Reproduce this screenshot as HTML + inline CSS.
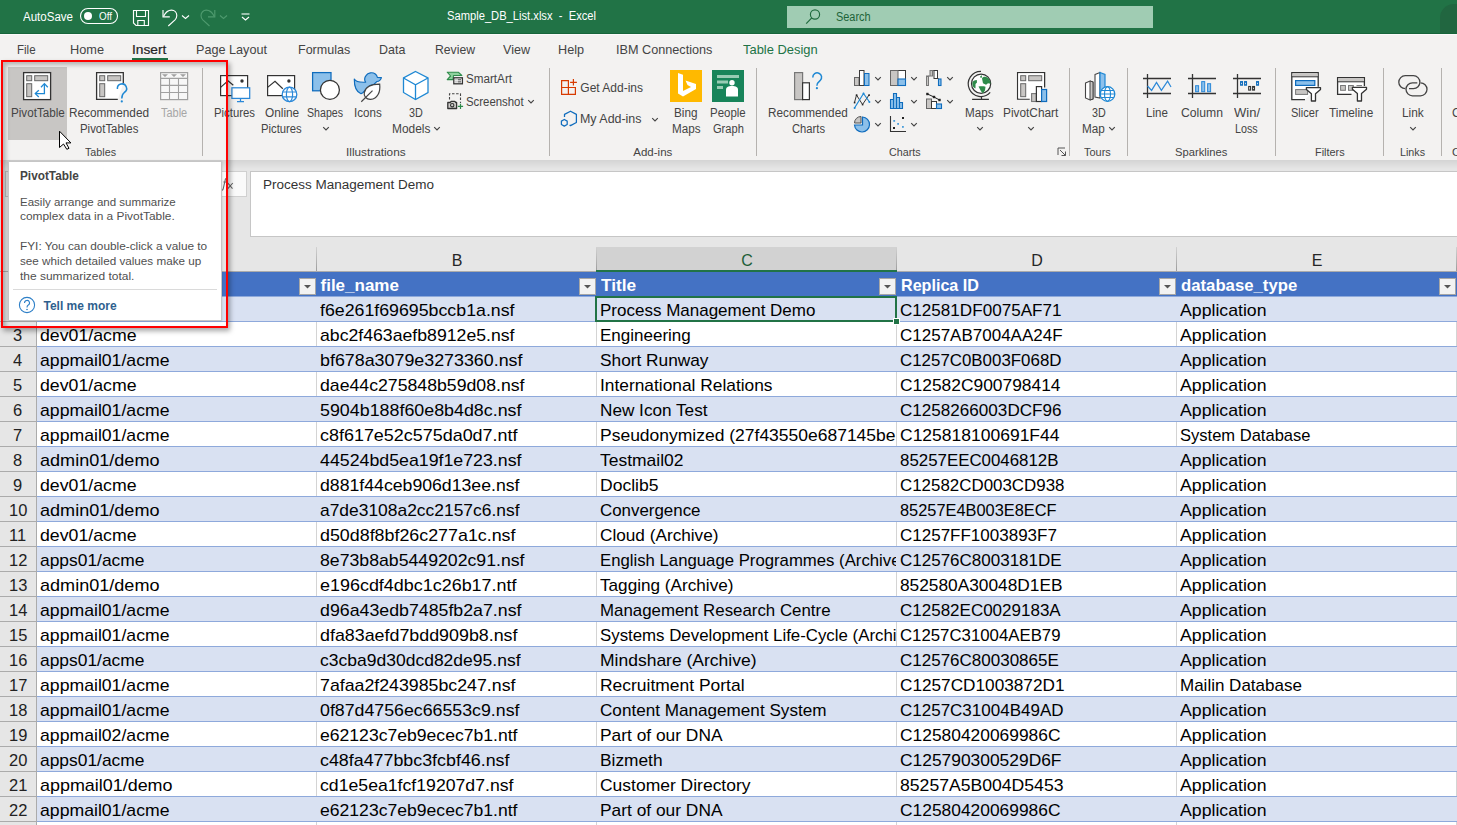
<!DOCTYPE html>
<html><head><meta charset="utf-8"><style>
html,body{margin:0;padding:0;width:1457px;height:825px;overflow:hidden;background:#fff;}
body{position:relative;font-family:"Liberation Sans",sans-serif;}
.t{position:absolute;white-space:pre;line-height:1;transform-origin:0 0;}
.r{position:absolute;}
.s{position:absolute;overflow:visible;}
</style></head><body>
<div class="r" style="left:0px;top:0px;width:1457px;height:33px;background:#217346;"></div>
<div class="r" style="left:0px;top:33px;width:1457px;height:1px;background:#17653B;"></div>
<div class="r" style="left:0px;top:34px;width:1457px;height:1px;background:#FBFAFA;"></div>
<div class="t" style="left:23px;top:11px;font-size:12.5px;color:#FFFFFF;transform:scaleX(0.9224);">AutoSave</div>
<svg class="s" style="left:79px;top:7px;" width="41" height="18" viewBox="0 0 41 18"><rect x="1.5" y="1.5" width="37" height="15" rx="7.5" fill="none" stroke="#fff" stroke-width="1.1"/><circle cx="9" cy="9" r="4" fill="#fff"/></svg>
<div class="t" style="left:99px;top:12px;font-size:10px;color:#FFFFFF;transform:scaleX(0.9883);">Off</div>
<svg class="s" style="left:132px;top:9px;" width="18" height="18" viewBox="0 0 18 18"><path d="M1.5 1.5 H16.5 V16.5 H4 L1.5 14 Z" fill="none" stroke="#fff" stroke-width="1.15"/><path d="M4.5 1.5 V7.5 H13.5 V1.5" fill="none" stroke="#fff" stroke-width="1.1"/><path d="M5.8 16.5 V11.5 H12.3 V16.5" fill="none" stroke="#fff" stroke-width="1.1"/></svg>
<svg class="s" style="left:160px;top:9px;" width="20" height="18" viewBox="0 0 20 18"><path d="M3 1 V7.9 H9.8" fill="none" stroke="#fff" stroke-width="1.15"/><path d="M3.6 7.3 C5.5 3.5 8.5 1.2 11.5 1.2 C14.5 1.2 16.8 3.5 16.8 6.5 C16.8 8.5 16 9.8 15 10.8 L8.3 17" fill="none" stroke="#fff" stroke-width="1.15"/></svg>
<svg class="s" style="left:181px;top:14px;" width="9" height="6" viewBox="0 0 9 6"><path d="M1 1.5 L4.5 4.5 L8 1.5" fill="none" stroke="#fff" stroke-width="1.1"/></svg>
<svg class="s" style="left:199px;top:9px;" width="20" height="18" viewBox="0 0 20 18"><path d="M15.8 1 V7.9 H9" fill="none" stroke="#4E9A6E" stroke-width="1.15"/><path d="M15.2 7.3 C13.3 3.5 10.3 1.2 7.3 1.2 C4.3 1.2 2 3.5 2 6.5 C2 8.5 2.8 9.8 3.8 10.8 L10.5 17" fill="none" stroke="#4E9A6E" stroke-width="1.15"/></svg>
<svg class="s" style="left:219px;top:14px;" width="9" height="6" viewBox="0 0 9 6"><path d="M1 1.5 L4.5 4.5 L8 1.5" fill="none" stroke="#4E9A6E" stroke-width="1.1"/></svg>
<svg class="s" style="left:240px;top:12px;" width="11" height="10" viewBox="0 0 11 10"><path d="M1.5 2 H9.5" stroke="#fff" stroke-width="1.1"/><path d="M2 5 L5.5 8 L9 5" fill="none" stroke="#fff" stroke-width="1.1"/></svg>
<div class="t" style="left:447px;top:10px;font-size:12px;color:#FFFFFF;transform:scaleX(0.9309);">Sample_DB_List.xlsx  -  Excel</div>
<div class="r" style="left:787px;top:6px;width:366px;height:22px;background:#A0CCB3;"></div>
<svg class="s" style="left:804px;top:9px;" width="18" height="17" viewBox="0 0 18 17"><circle cx="11" cy="5.5" r="4.6" fill="none" stroke="#1F6A3D" stroke-width="1.15"/><path d="M7.8 8.8 L2.2 14.6" stroke="#1F6A3D" stroke-width="1.2"/></svg>
<div class="t" style="left:836px;top:11px;font-size:12px;color:#1E6439;transform:scaleX(0.9100);">Search</div>
<div class="r" style="left:1440px;top:4px;width:40px;height:29px;border-radius:14px 0 0 0;background:#216640"></div>
<div class="r" style="left:0px;top:35px;width:1457px;height:125px;background:#F3F2F1;"></div>
<div class="t" style="left:17px;top:43px;font-size:13px;color:#444444;transform:scaleX(0.8879);">File</div>
<div class="t" style="left:69.5px;top:43px;font-size:13px;color:#444444;transform:scaleX(0.9805);">Home</div>
<div class="t" style="left:196.3px;top:43px;font-size:13px;color:#444444;transform:scaleX(0.9725);">Page Layout</div>
<div class="t" style="left:297.5px;top:43px;font-size:13px;color:#444444;transform:scaleX(0.9635);">Formulas</div>
<div class="t" style="left:379px;top:43px;font-size:13px;color:#444444;transform:scaleX(0.9578);">Data</div>
<div class="t" style="left:435px;top:43px;font-size:13px;color:#444444;transform:scaleX(0.9384);">Review</div>
<div class="t" style="left:503px;top:43px;font-size:13px;color:#444444;transform:scaleX(0.9663);">View</div>
<div class="t" style="left:558.4px;top:43px;font-size:13px;color:#444444;transform:scaleX(0.9725);">Help</div>
<div class="t" style="left:616px;top:43px;font-size:13px;color:#444444;transform:scaleX(0.9738);">IBM Connections</div>
<div class="t" style="left:132.3px;top:43px;font-size:13px;color:#262626;transform:scaleX(1.0580);-webkit-text-stroke:0.2px #262626;">Insert</div>
<div class="t" style="left:743px;top:43px;font-size:13px;color:#217346;transform:scaleX(0.9926);">Table Design</div>
<div class="r" style="left:132px;top:58px;width:36px;height:2px;background:#217346;"></div>
<div class="r" style="left:8px;top:67px;width:59px;height:73px;background:#C8C6C4;"></div>
<svg class="s" style="left:22px;top:71px;" width="31" height="31" viewBox="0 0 31 31"><rect x="1.6" y="1.6" width="27" height="27" fill="#fff" stroke="#333" stroke-width="1.3"/><rect x="4.7" y="4.7" width="5" height="5" fill="#C8C6C4" stroke="#666" stroke-width="1"/><rect x="12.7" y="4.7" width="13" height="5" fill="#C8C6C4" stroke="#666" stroke-width="1"/><rect x="4.7" y="12.7" width="5" height="13" fill="#C8C6C4" stroke="#666" stroke-width="1"/><path d="M22.4 13 V22.6 H13.5" fill="none" stroke="#1E88D4" stroke-width="1.3"/><path d="M19 16.2 L22.4 12.6 L25.8 16.2" fill="none" stroke="#1E88D4" stroke-width="1.3"/><path d="M16.8 19.2 L13.3 22.6 L16.8 26" fill="none" stroke="#1E88D4" stroke-width="1.3"/></svg>
<div class="t" style="left:10.5px;top:107px;font-size:12px;color:#444444;transform:scaleX(0.9717);">PivotTable</div>
<svg class="s" style="left:95px;top:71px;" width="33" height="33" viewBox="0 0 33 33"><path d="M28.3 12.5 V1.6 H1.6 V28.3 H22.8" fill="#fff" stroke="#333" stroke-width="1.3"/><rect x="4.7" y="4.7" width="5" height="5" fill="#C8C6C4" stroke="#666" stroke-width="1"/><rect x="12.7" y="4.7" width="13" height="5" fill="#C8C6C4" stroke="#666" stroke-width="1"/><rect x="4.7" y="12.7" width="5" height="13" fill="#C8C6C4" stroke="#666" stroke-width="1"/><path d="M22.4 18 A4.6 4.6 0 1 1 29.3 21.5 C27.6 22.8 26.8 23.6 26.8 27.5" fill="none" stroke="#1E88D4" stroke-width="1.5"/><circle cx="26.8" cy="30.4" r="1.1" fill="#1E88D4"/></svg>
<div class="t" style="left:69.3px;top:107px;font-size:12px;color:#444444;transform:scaleX(0.9831);">Recommended</div>
<div class="t" style="left:80.4px;top:123px;font-size:12px;color:#444444;transform:scaleX(0.9517);">PivotTables</div>
<svg class="s" style="left:159px;top:71px;" width="31" height="31" viewBox="0 0 31 31"><rect x="1.6" y="1.6" width="27" height="27" fill="#F7F7F7" stroke="#A0A0A0" stroke-width="1.2"/><path d="M10.5 7.4 V28.6 M19.5 7.4 V28.6 M1.6 7.4 H28.6 M1.6 14.4 H28.6 M1.6 21.5 H28.6" stroke="#A0A0A0" stroke-width="1.1"/><path d="M3 3.2 H9 L6 5.9Z M12 3.2 H18 L15 5.9Z M21 3.2 H27 L24 5.9Z" fill="#A0A0A0"/></svg>
<div class="t" style="left:160.8px;top:107px;font-size:12px;color:#A6A6A6;transform:scaleX(0.9133);">Table</div>
<div class="t" style="left:85.3px;top:147px;font-size:11.5px;color:#444444;transform:scaleX(0.9325);">Tables</div>
<div class="r" style="left:202px;top:68px;width:1px;height:88px;background:#B5B2AF;"></div>
<svg class="s" style="left:219px;top:74px;" width="34" height="30" viewBox="0 0 34 30"><rect x="1.6" y="1.6" width="27" height="20" fill="#fff" stroke="#333" stroke-width="1.2"/><path d="M1.6 13.4 L9 6.7 L14.3 11.2" fill="none" stroke="#333" stroke-width="1.2"/><circle cx="23" cy="7" r="1.7" fill="#333"/><rect x="12.9" y="13.8" width="17.8" height="10.6" fill="#fff" stroke="#2B88D8" stroke-width="1.25"/><path d="M21.5 24.4 V27.3 M18 27.6 H25" stroke="#2B88D8" stroke-width="1.25"/></svg>
<div class="t" style="left:213.5px;top:107px;font-size:12px;color:#444444;transform:scaleX(0.9458);">Pictures</div>
<svg class="s" style="left:266px;top:74px;" width="34" height="30" viewBox="0 0 34 30"><rect x="1.6" y="1.6" width="27" height="20" fill="#fff" stroke="#333" stroke-width="1.2"/><path d="M1.6 13.4 L9 7.2 L16.8 14.7" fill="none" stroke="#333" stroke-width="1.2"/><circle cx="22.9" cy="7" r="1.7" fill="#333"/><circle cx="23.5" cy="20.4" r="7.3" fill="#fff" stroke="#2B88D8" stroke-width="1.3"/><ellipse cx="23.5" cy="20.4" rx="3.1" ry="7.3" fill="none" stroke="#2B88D8" stroke-width="1.2"/><path d="M16.5 18 H30.5 M16.5 22.8 H30.5" stroke="#2B88D8" stroke-width="1.2"/></svg>
<div class="t" style="left:264.7px;top:107px;font-size:12px;color:#444444;transform:scaleX(0.9859);">Online</div>
<div class="t" style="left:260.8px;top:123px;font-size:12px;color:#444444;transform:scaleX(0.9389);">Pictures</div>
<svg class="s" style="left:311px;top:71px;" width="31" height="31" viewBox="0 0 31 31"><rect x="1.6" y="1.6" width="18.4" height="18.2" fill="#8CC0EA" stroke="#0F6CBD" stroke-width="1.25"/><circle cx="18.9" cy="18.9" r="9.5" fill="#fff" stroke="#333" stroke-width="1.25"/></svg>
<div class="t" style="left:307.4px;top:107px;font-size:12px;color:#444444;transform:scaleX(0.8845);">Shapes</div>
<svg class="s" style="left:353px;top:71px;" width="30" height="32" viewBox="0 0 30 32"><path d="M1.3 8 C2.5 10.5 6 11.5 12.6 11.2 C11.5 9.5 11.6 6.5 13 4.6 C15 1.6 19.5 0.8 22.3 3 C23.3 3.8 24 4.9 24.4 6.3 L28.4 6.6 C27.8 8.8 26 10.3 23.8 10.5 C22.5 12.5 20 14 17 14.5 L10 21.5 C8.8 22.5 8.2 22.7 8 22.7 C3.5 21 1.2 16 1.3 8 Z" fill="#8CC0EA" stroke="#0F6CBD" stroke-width="1.2" stroke-linejoin="round"/><path d="M26.7 13.2 C20 13.2 12.7 15 11.3 21.5 C10.5 25.5 13.5 28.6 17.6 28.4 C24.5 27.8 27.6 21 26.7 13.2 Z" fill="#fff" stroke="#444" stroke-width="1.2"/><path d="M8.3 30.7 L19.5 19.6" stroke="#444" stroke-width="1.2"/></svg>
<div class="t" style="left:354px;top:107px;font-size:12px;color:#444444;transform:scaleX(0.9658);">Icons</div>
<svg class="s" style="left:402px;top:70px;" width="28" height="31" viewBox="0 0 28 31"><path d="M13.5 1.5 L26 8 V22.5 L13.5 29.5 L1.5 22.5 V8 Z" fill="#fff" stroke="#1E88D4" stroke-width="1.3"/><path d="M1.5 8 L13.5 14.8 L26 8 M13.5 14.8 V29.5" fill="none" stroke="#1E88D4" stroke-width="1.3"/></svg>
<div class="t" style="left:409px;top:107px;font-size:12px;color:#444444;transform:scaleX(0.8996);">3D</div>
<div class="t" style="left:391.6px;top:122.5px;font-size:12px;color:#444444;transform:scaleX(0.9927);">Models</div>
<svg class="s" style="left:446px;top:71px;" width="19" height="15" viewBox="0 0 19 15"><path d="M1.2 1.2 H12.3 L15.8 4.5 H7.5 L7 8.6 H1.2 L4.6 5 Z" fill="#8FD19E" stroke="#2E8B4A" stroke-width="1.1" stroke-linejoin="round"/><rect x="7.8" y="6.8" width="8.6" height="6" fill="#fff" stroke="#333" stroke-width="1.3"/><path d="M9.6 8.8 H10.4 M11.6 8.8 H15 M9.6 10.9 H10.4 M11.6 10.9 H15" stroke="#333" stroke-width="1"/></svg>
<div class="t" style="left:466.4px;top:73px;font-size:12px;color:#444444;transform:scaleX(0.9717);">SmartArt</div>
<svg class="s" style="left:446px;top:92px;" width="19" height="18" viewBox="0 0 19 18"><path d="M3.5 7.5 V1.8 H14.5 V11" fill="none" stroke="#444" stroke-width="1.1" stroke-dasharray="2.5 1.6"/><path d="M1.8 10.5 H4.2 L5.2 9.3 H8.8 L9.8 10.5 H10.6 V16.5 H1.8 Z" fill="#D0CECC" stroke="#333" stroke-width="1.3" stroke-linejoin="round"/><circle cx="6.2" cy="13.2" r="1.7" fill="none" stroke="#333" stroke-width="1.1"/><path d="M14.5 11.8 V17 M11.9 14.4 H17.1" stroke="#2E8B4A" stroke-width="1.2"/></svg>
<div class="t" style="left:466.4px;top:95.5px;font-size:12px;color:#444444;transform:scaleX(0.9489);">Screenshot</div>
<div class="t" style="left:345.8px;top:147px;font-size:11.5px;color:#444444;transform:scaleX(1.0247);">Illustrations</div>
<div class="r" style="left:549px;top:68px;width:1px;height:88px;background:#B5B2AF;"></div>
<svg class="s" style="left:560px;top:78px;" width="18" height="18" viewBox="0 0 18 18"><path d="M1.6 2.6 H8.4 V16.4 H1.6 Z M1.6 9.5 H15.4 V16.4 H8.4" fill="none" stroke="#D83B01" stroke-width="1.2"/><path d="M13.4 1 V7.6 M10.1 4.4 H16.9" stroke="#D83B01" stroke-width="1.2"/></svg>
<div class="t" style="left:580.3px;top:81.5px;font-size:12px;color:#444444;">Get Add-ins</div>
<svg class="s" style="left:560px;top:110px;" width="18" height="18" viewBox="0 0 18 18"><path d="M4.5 6.9 V4.4 L10.5 1.2 L16.4 4.4 V12.5 L10.5 15.6 L9.6 15.1" fill="none" stroke="#0F6CBD" stroke-width="1.25" stroke-linejoin="round"/><path d="M4.3 9.5 L7.2 11.1 V14.5 L4.3 16.1 L1.4 14.5 V11.1 Z" fill="none" stroke="#0F6CBD" stroke-width="1.25" stroke-linejoin="round"/></svg>
<div class="t" style="left:580.3px;top:113.3px;font-size:12px;color:#444444;transform:scaleX(1.0361);">My Add-ins</div>
<div class="r" style="left:670px;top:70px;width:32px;height:32px;background:#FFB900;"></div>
<svg class="s" style="left:670px;top:70px;" width="32" height="32" viewBox="0 0 32 32"><path d="M8 3 L13 4.8 V21 L21 17 L17.5 15 L15.5 10.5 L26 14 V19 L13 26.5 L8 23.5 Z" fill="#fff"/></svg>
<div class="t" style="left:674.2px;top:107px;font-size:12px;color:#444444;transform:scaleX(0.9784);">Bing</div>
<div class="t" style="left:671.5px;top:123px;font-size:12px;color:#444444;transform:scaleX(0.9712);">Maps</div>
<div class="r" style="left:712px;top:70px;width:32px;height:32px;background:#18845A;"></div>
<svg class="s" style="left:712px;top:70px;" width="32" height="32" viewBox="0 0 32 32"><rect x="5" y="5" width="22" height="3" fill="#98CBB4"/><rect x="5" y="10.5" width="11" height="3" fill="#98CBB4"/><rect x="5" y="16" width="6" height="3" fill="#98CBB4"/><circle cx="20" cy="12.7" r="2.7" fill="#fff"/><path d="M14 26.5 V20 C14 17 16 16 20 16 C24 16 26 17 26 20 V26.5 Z" fill="#fff"/></svg>
<div class="t" style="left:710.3px;top:107px;font-size:12px;color:#444444;transform:scaleX(0.9554);">People</div>
<div class="t" style="left:712.6px;top:123px;font-size:12px;color:#444444;transform:scaleX(0.9235);">Graph</div>
<div class="t" style="left:633.3px;top:147px;font-size:11.5px;color:#444444;">Add-ins</div>
<div class="r" style="left:756px;top:68px;width:1px;height:88px;background:#B5B2AF;"></div>
<svg class="s" style="left:793px;top:71px;" width="31" height="31" viewBox="0 0 31 31"><rect x="1.6" y="1.6" width="8" height="27" fill="#C8C6C4" stroke="#777" stroke-width="1.2"/><rect x="9.6" y="11.8" width="6.8" height="16.8" fill="#fff" stroke="#333" stroke-width="1.2"/><path d="M19.8 6.5 A4.4 4.4 0 1 1 27.2 9.5 C25.2 11.2 23.9 12.2 23.9 14.8" fill="none" stroke="#1E88D4" stroke-width="1.5"/><circle cx="23.9" cy="17.2" r="1.1" fill="#1E88D4"/></svg>
<div class="t" style="left:767.7px;top:107px;font-size:12px;color:#444444;transform:scaleX(0.9794);">Recommended</div>
<div class="t" style="left:791.9px;top:123px;font-size:12px;color:#444444;transform:scaleX(0.9337);">Charts</div>
<svg class="s" style="left:853px;top:69px;" width="19" height="19" viewBox="0 0 19 19"><rect x="1.5" y="8.5" width="4.5" height="8" fill="#C8C6C4" stroke="#666" stroke-width="1"/><rect x="6.5" y="1.5" width="4.5" height="15" fill="#fff" stroke="#3A3A3A" stroke-width="1"/><rect x="11.5" y="4.5" width="4.5" height="12" fill="#8CC0EA" stroke="#0F6CBD" stroke-width="1"/></svg>
<svg class="s" style="left:874px;top:76px;" width="8" height="6" viewBox="0 0 8 6"><path d="M1.2 1.2 L4 4 L6.8 1.2" fill="none" stroke="#444" stroke-width="1.15"/></svg>
<svg class="s" style="left:853px;top:92px;" width="19" height="19" viewBox="0 0 19 19"><path d="M1.5 10.5 L3.5 3 L9.5 12.5 L16 3" fill="none" stroke="#333" stroke-width="1"/><rect x="0.8" y="9.8" width="1.6" height="1.6" fill="#222"/><rect x="2.8" y="2.3" width="1.6" height="1.6" fill="#222"/><rect x="8.8" y="11.8" width="1.6" height="1.6" fill="#222"/><rect x="15.3" y="2.3" width="1.6" height="1.6" fill="#222"/><path d="M1.5 16 L10.5 1.5 L16.5 10" fill="none" stroke="#1E88D4" stroke-width="1.2"/><circle cx="1.6" cy="16" r="1" fill="#1E88D4"/><circle cx="10.5" cy="1.6" r="1" fill="#1E88D4"/><circle cx="16.4" cy="10" r="1" fill="#1E88D4"/></svg>
<svg class="s" style="left:874px;top:99px;" width="8" height="6" viewBox="0 0 8 6"><path d="M1.2 1.2 L4 4 L6.8 1.2" fill="none" stroke="#444" stroke-width="1.15"/></svg>
<svg class="s" style="left:853px;top:115px;" width="19" height="19" viewBox="0 0 19 19"><path d="M9.5 2 A7.5 7.5 0 1 1 1.5 10 H9.5 Z" fill="#8CC0EA" stroke="#0F6CBD" stroke-width="1.2"/><path d="M8 1.5 A6.5 6.5 0 0 0 1.5 8 H8 Z" fill="#C8C6C4" stroke="#555" stroke-width="1"/></svg>
<svg class="s" style="left:874px;top:122px;" width="8" height="6" viewBox="0 0 8 6"><path d="M1.2 1.2 L4 4 L6.8 1.2" fill="none" stroke="#444" stroke-width="1.15"/></svg>
<svg class="s" style="left:889px;top:69px;" width="19" height="19" viewBox="0 0 19 19"><rect x="1.5" y="1.5" width="15" height="15" fill="#fff" stroke="#3A3A3A" stroke-width="1"/><rect x="1.5" y="1.5" width="7.5" height="15" fill="#C8C6C4" stroke="#666" stroke-width="1"/><rect x="9" y="10" width="7.5" height="6.5" fill="#8CC0EA" stroke="#0F6CBD" stroke-width="1.1"/></svg>
<svg class="s" style="left:910px;top:76px;" width="8" height="6" viewBox="0 0 8 6"><path d="M1.2 1.2 L4 4 L6.8 1.2" fill="none" stroke="#444" stroke-width="1.15"/></svg>
<svg class="s" style="left:889px;top:92px;" width="19" height="19" viewBox="0 0 19 19"><path d="M1.5 16.5 V7.5 H4.5 V16.5 Z M4.5 16.5 V1.5 H7.5 V16.5 Z M7.5 16.5 V5.5 H10.5 V16.5 Z M10.5 16.5 V10.5 H13.5 V16.5 Z" fill="#8CC0EA" stroke="#0F6CBD" stroke-width="1.1"/></svg>
<svg class="s" style="left:910px;top:99px;" width="8" height="6" viewBox="0 0 8 6"><path d="M1.2 1.2 L4 4 L6.8 1.2" fill="none" stroke="#444" stroke-width="1.15"/></svg>
<svg class="s" style="left:889px;top:115px;" width="19" height="19" viewBox="0 0 19 19"><path d="M1.5 1 V16.5 H17" fill="none" stroke="#333" stroke-width="1.1"/><rect x="4" y="12" width="2" height="2" fill="#222"/><rect x="13" y="2" width="2" height="2" fill="#222"/><rect x="4.3" y="5" width="1.8" height="1.8" fill="#1E88D4" opacity=".8"/><rect x="8.2" y="8" width="1.8" height="1.8" fill="#1E88D4" opacity=".8"/><rect x="13" y="11" width="1.8" height="1.8" fill="#1E88D4" opacity=".8"/></svg>
<svg class="s" style="left:910px;top:122px;" width="8" height="6" viewBox="0 0 8 6"><path d="M1.2 1.2 L4 4 L6.8 1.2" fill="none" stroke="#444" stroke-width="1.15"/></svg>
<svg class="s" style="left:925px;top:69px;" width="19" height="19" viewBox="0 0 19 19"><rect x="1.5" y="7" width="2" height="9.5" fill="#C8C6C4" stroke="#777" stroke-width="1"/><rect x="5" y="1.5" width="2.5" height="5.5" fill="#C8C6C4" stroke="#777" stroke-width="1"/><path d="M3.5 7 H5 M7.5 1.5 H9" stroke="#777" stroke-width="1"/><rect x="9" y="1.5" width="3.5" height="8" fill="#fff" stroke="#3A3A3A" stroke-width="1"/><rect x="13.5" y="10" width="2.5" height="6.5" fill="#8CC0EA" stroke="#0F6CBD" stroke-width="1.1"/><path d="M12.5 9.5 H13.5" stroke="#3A3A3A" stroke-width="1"/></svg>
<svg class="s" style="left:946px;top:76px;" width="8" height="6" viewBox="0 0 8 6"><path d="M1.2 1.2 L4 4 L6.8 1.2" fill="none" stroke="#444" stroke-width="1.15"/></svg>
<svg class="s" style="left:925px;top:92px;" width="19" height="19" viewBox="0 0 19 19"><rect x="1.5" y="7" width="5" height="9.5" fill="#C8C6C4" stroke="#666" stroke-width="1"/><rect x="6.5" y="9.5" width="5" height="7" fill="#fff" stroke="#3A3A3A" stroke-width="1"/><rect x="11.5" y="12" width="5" height="4.5" fill="#8CC0EA" stroke="#0F6CBD" stroke-width="1.1"/><path d="M2.5 2 L9 5 L14.5 8" fill="none" stroke="#222" stroke-width="1"/><rect x="1.2" y="0.8" width="2.4" height="2.4" fill="#222"/><rect x="7.8" y="3.8" width="2.4" height="2.4" fill="#222"/><rect x="13.3" y="6.8" width="2.4" height="2.4" fill="#222"/></svg>
<svg class="s" style="left:946px;top:99px;" width="8" height="6" viewBox="0 0 8 6"><path d="M1.2 1.2 L4 4 L6.8 1.2" fill="none" stroke="#444" stroke-width="1.15"/></svg>
<svg class="s" style="left:966px;top:70px;" width="27" height="31" viewBox="0 0 27 31"><circle cx="15.1" cy="13.7" r="9.6" fill="#fff" stroke="#333" stroke-width="1.2"/><path d="M6.3 13 C6.5 11 8.5 10.3 10.8 10 L11 12.5 L9.5 14 L9.5 18.5 C7.5 18 6.3 16 6.3 13Z" fill="#2E8B4A"/><path d="M16 8.5 C16.5 6.8 19 6.3 21.5 7.4 C23.5 8.8 24.5 11 24.6 13.8 L22 13.2 L20 14.8 L17 13.2 Z" fill="#2E8B4A"/><path d="M14.2 6.2 L16 5.2 L15.8 7.8 L14.4 7.8Z" fill="#2E8B4A"/><path d="M12.5 16.5 C14.5 16.3 17.5 16 19.5 16.8 L19 20.5 L17 23.3 C15.2 22.5 14 19 12.5 16.5Z" fill="#2E8B4A"/><path d="M15 1.3 A12.6 12.6 0 1 0 24.2 22.4" fill="none" stroke="#333" stroke-width="1.2"/><path d="M15.5 26 V29.4 M6.1 29.4 H22.9" stroke="#333" stroke-width="1.2"/></svg>
<div class="t" style="left:965.4px;top:107px;font-size:12px;color:#444444;transform:scaleX(0.9712);">Maps</div>
<svg class="s" style="left:976px;top:126px;" width="8" height="6" viewBox="0 0 8 6"><path d="M1.2 1.2 L4 4 L6.8 1.2" fill="none" stroke="#444" stroke-width="1.15"/></svg>
<svg class="s" style="left:1016px;top:71px;" width="33" height="33" viewBox="0 0 33 33"><path d="M28.6 16.6 V1.6 H1.6 V28.2 H13.7" fill="#fff" stroke="#333" stroke-width="1.3"/><rect x="2.3" y="2.3" width="25.6" height="25.2" fill="#fff"/><rect x="4.7" y="4.7" width="5" height="5" fill="#C8C6C4" stroke="#666" stroke-width="1"/><rect x="12.7" y="4.7" width="13" height="5" fill="#C8C6C4" stroke="#666" stroke-width="1"/><rect x="4.7" y="12.7" width="5" height="13" fill="#C8C6C4" stroke="#666" stroke-width="1"/><rect x="15.6" y="22.6" width="4.8" height="7.9" fill="#C8C6C4" stroke="#777" stroke-width="1.1"/><rect x="20.4" y="15.6" width="5.2" height="14.9" fill="#fff" stroke="#333" stroke-width="1.2"/><rect x="25.6" y="18.5" width="5" height="12" fill="#8CC0EA" stroke="#0F6CBD" stroke-width="1.2"/></svg>
<div class="t" style="left:1003.4px;top:107px;font-size:12px;color:#444444;transform:scaleX(0.9871);">PivotChart</div>
<svg class="s" style="left:1027px;top:126px;" width="8" height="6" viewBox="0 0 8 6"><path d="M1.2 1.2 L4 4 L6.8 1.2" fill="none" stroke="#444" stroke-width="1.15"/></svg>
<svg class="s" style="left:1057px;top:147px;" width="10" height="10" viewBox="0 0 10 10"><path d="M1 8 V1 H8" fill="none" stroke="#555" stroke-width="1"/><path d="M3 3 L8.5 8.5 M8.5 4.5 V8.5 H4.5" fill="none" stroke="#555" stroke-width="1"/></svg>
<div class="t" style="left:888.7px;top:147px;font-size:11.5px;color:#444444;transform:scaleX(0.9329);">Charts</div>
<div class="r" style="left:1069px;top:68px;width:1px;height:88px;background:#B5B2AF;"></div>
<svg class="s" style="left:1084px;top:71px;" width="33" height="33" viewBox="0 0 33 33"><path d="M1.5 12 L6 10 L9 11 V28 L6 29 L1.5 27 Z" fill="#fff" stroke="#444" stroke-width="1.1"/><path d="M6 10 L9 11 V28 L6 29Z" fill="#C8C6C4" stroke="#444" stroke-width="1"/><path d="M11 3.5 L16 1.5 V27 L11 26 Z" fill="#fff" stroke="#444" stroke-width="1.1"/><path d="M16 1.5 L21 3.5 V20 L16 24Z" fill="#8DC1EC" stroke="#1E88D4" stroke-width="1.2"/><circle cx="23.5" cy="23" r="7.3" fill="#fff" stroke="#1E88D4" stroke-width="1.3"/><ellipse cx="23.5" cy="23" rx="3" ry="7.3" fill="none" stroke="#1E88D4" stroke-width="1.1"/><path d="M16.2 23 H30.8 M17.2 19.5 H29.8 M17.2 26.5 H29.8" stroke="#1E88D4" stroke-width="1.1"/></svg>
<div class="t" style="left:1092px;top:107px;font-size:12px;color:#444444;transform:scaleX(0.8931);">3D</div>
<div class="t" style="left:1081.6px;top:122.5px;font-size:12px;color:#444444;transform:scaleX(0.9767);">Map</div>
<div class="t" style="left:1084.4px;top:147px;font-size:11.5px;color:#444444;transform:scaleX(0.9530);">Tours</div>
<div class="r" style="left:1127px;top:68px;width:1px;height:88px;background:#B5B2AF;"></div>
<svg class="s" style="left:1143px;top:73px;" width="30" height="26" viewBox="0 0 30 26"><path d="M4.5 1 V25 M0 5.5 H28 M0 20.5 H28" stroke="#333" stroke-width="1.3"/><path d="M4.5 13 L8.6 17.4 L13.5 9.4 L18.4 17.4 L24.6 8.2 L28 14" fill="none" stroke="#2B88D8" stroke-width="1.2"/></svg>
<div class="t" style="left:1146.4px;top:107px;font-size:12px;color:#444444;transform:scaleX(0.9609);">Line</div>
<svg class="s" style="left:1188px;top:73px;" width="30" height="26" viewBox="0 0 30 26"><path d="M4.5 1 V25 M0 5.5 H28 M0 20.5 H28" stroke="#333" stroke-width="1.3"/><rect x="7.6" y="12.7" width="3" height="6" fill="#8CC0EA" stroke="#2B88D8" stroke-width="1"/><rect x="13.7" y="8.6" width="3" height="10.1" fill="#8CC0EA" stroke="#2B88D8" stroke-width="1"/><rect x="19.6" y="10.7" width="3" height="8" fill="#8CC0EA" stroke="#2B88D8" stroke-width="1"/></svg>
<div class="t" style="left:1180.5px;top:107px;font-size:12px;color:#444444;transform:scaleX(1.0157);">Column</div>
<svg class="s" style="left:1233px;top:73px;" width="30" height="26" viewBox="0 0 30 26"><path d="M4.5 1 V25 M0 5.5 H28 M0 20.5 H28" stroke="#333" stroke-width="1.3"/><rect x="7.6" y="8.6" width="1.9" height="3.6" fill="none" stroke="#0F6CBD" stroke-width="1.1"/><rect x="11.6" y="8.6" width="1.9" height="3.6" fill="none" stroke="#0F6CBD" stroke-width="1.1"/><rect x="23.6" y="8.6" width="1.9" height="3.6" fill="none" stroke="#0F6CBD" stroke-width="1.1"/><rect x="15.7" y="13.5" width="1.9" height="3.6" fill="none" stroke="#333" stroke-width="1.1"/><rect x="19.6" y="13.5" width="1.9" height="3.6" fill="none" stroke="#333" stroke-width="1.1"/></svg>
<div class="t" style="left:1234px;top:107px;font-size:12px;color:#444444;transform:scaleX(1.0833);">Win/</div>
<div class="t" style="left:1235px;top:123px;font-size:12px;color:#444444;transform:scaleX(0.8955);">Loss</div>
<div class="t" style="left:1175.4px;top:147px;font-size:11.5px;color:#444444;transform:scaleX(0.9741);">Sparklines</div>
<div class="r" style="left:1275px;top:68px;width:1px;height:88px;background:#B5B2AF;"></div>
<svg class="s" style="left:1290px;top:71px;" width="33" height="33" viewBox="0 0 33 33"><path d="M15 28.6 H1.8 V1.7 H28.2 V15.8" fill="#fff" stroke="#333" stroke-width="1.3"/><rect x="2.4" y="2.3" width="25.2" height="3.2" fill="#C8C6C4"/><path d="M1.8 5.8 H28.2" stroke="#333" stroke-width="1"/><rect x="5.6" y="9.6" width="19.2" height="4.8" fill="#8CC0EA" stroke="#0F6CBD" stroke-width="1.2"/><rect x="5.6" y="18.6" width="12" height="4.8" fill="#C8C6C4" stroke="#777" stroke-width="1"/><path d="M16.4 16.6 H30.5 V18.5 L25.5 22.8 V30 H21.4 V22.8 L16.4 18.5 Z" fill="#fff" stroke="#333" stroke-width="1.3" stroke-linejoin="round"/></svg>
<div class="t" style="left:1291.2px;top:107px;font-size:12px;color:#444444;transform:scaleX(0.9198);">Slicer</div>
<svg class="s" style="left:1336px;top:76px;" width="33" height="28" viewBox="0 0 33 28"><path d="M15.5 18.4 H1.6 V1.7 H28.4 V10" fill="#fff" stroke="#333" stroke-width="1.3"/><rect x="2.2" y="2.3" width="25.6" height="3.3" fill="#C8C6C4"/><path d="M1.6 5.8 H28.4" stroke="#333" stroke-width="1"/><rect x="4.6" y="9.5" width="4.8" height="4.8" fill="#C8C6C4" stroke="#777" stroke-width="1"/><rect x="12.5" y="9.5" width="4.8" height="4.8" fill="#C8C6C4" stroke="#777" stroke-width="1"/><path d="M20.5 9.6 H26" stroke="#777" stroke-width="1"/><path d="M16.4 11.3 H30.5 V13.2 L25.5 17.5 V25 H21.4 V17.5 L16.4 13.2 Z" fill="#fff" stroke="#333" stroke-width="1.3" stroke-linejoin="round"/></svg>
<div class="t" style="left:1328.8px;top:107px;font-size:12px;color:#444444;transform:scaleX(0.9844);">Timeline</div>
<div class="t" style="left:1314.7px;top:147px;font-size:11.5px;color:#444444;transform:scaleX(0.9487);">Filters</div>
<div class="r" style="left:1383px;top:68px;width:1px;height:88px;background:#B5B2AF;"></div>
<svg class="s" style="left:1397px;top:74px;" width="32" height="24" viewBox="0 0 32 24"><path d="M12 14.6 H16.45 A6.45 6.45 0 0 0 16.45 1.7 H8.25 A6.45 6.45 0 0 0 8.25 14.6" fill="none" stroke="#444" stroke-width="1.3"/><path d="M20.3 8.9 H15.45 A6.45 6.45 0 0 0 15.45 21.8 H23.55 A6.45 6.45 0 0 0 23.55 8.9" fill="none" stroke="#444" stroke-width="1.3"/></svg>
<div class="t" style="left:1402.2px;top:107px;font-size:12px;color:#444444;transform:scaleX(0.9903);">Link</div>
<svg class="s" style="left:1409px;top:126px;" width="8" height="6" viewBox="0 0 8 6"><path d="M1.2 1.2 L4 4 L6.8 1.2" fill="none" stroke="#444" stroke-width="1.15"/></svg>
<div class="t" style="left:1399.6px;top:147px;font-size:11.5px;color:#444444;transform:scaleX(0.9349);">Links</div>
<div class="r" style="left:1441px;top:68px;width:1px;height:88px;background:#B5B2AF;"></div>
<div class="t" style="left:1452px;top:107px;font-size:12px;color:#444444;">C</div>
<div class="t" style="left:1452px;top:147px;font-size:11.5px;color:#444444;">C</div>
<svg class="s" style="left:322px;top:126px;" width="8" height="6" viewBox="0 0 8 6"><path d="M1.2 1.2 L4 4 L6.8 1.2" fill="none" stroke="#444" stroke-width="1.15"/></svg>
<svg class="s" style="left:433px;top:126px;" width="8" height="6" viewBox="0 0 8 6"><path d="M1.2 1.2 L4 4 L6.8 1.2" fill="none" stroke="#444" stroke-width="1.15"/></svg>
<svg class="s" style="left:527px;top:99px;" width="8" height="6" viewBox="0 0 8 6"><path d="M1.2 1.2 L4 4 L6.8 1.2" fill="none" stroke="#444" stroke-width="1.15"/></svg>
<svg class="s" style="left:651px;top:117px;" width="8" height="6" viewBox="0 0 8 6"><path d="M1.2 1.2 L4 4 L6.8 1.2" fill="none" stroke="#444" stroke-width="1.15"/></svg>
<svg class="s" style="left:1108px;top:126px;" width="8" height="6" viewBox="0 0 8 6"><path d="M1.2 1.2 L4 4 L6.8 1.2" fill="none" stroke="#444" stroke-width="1.15"/></svg>
<div class="r" style="left:0px;top:160px;width:1457px;height:87px;background:#E6E6E6;"></div>
<div class="r" style="left:0;top:160px;width:1457px;height:9px;background:linear-gradient(#D4D4D4,#E6E6E6)"></div>
<div class="r" style="left:5px;top:171px;width:4px;height:26px;background:#E2E2E2;box-sizing:border-box;border:1px solid #BDBDBD;border-right:none;"></div>
<div class="r" style="left:221px;top:171px;width:26px;height:26px;background:#FAFAFA;box-sizing:border-box;border:1px solid #D0D0D0;"></div>
<svg class="s" style="left:221px;top:176px;" width="16" height="16" viewBox="0 0 16 16"><path d="M6.5 2.8 C5.8 1.8 4.8 2 4.4 3.2 L2.2 12.8 C1.8 14.2 1 14.5 0.8 13.6" fill="none" stroke="#666" stroke-width="1.1"/><path d="M2.4 6 H6.4" stroke="#666" stroke-width="1"/><path d="M6.8 7 L11.5 12.6 M11.8 7 L6.6 12.8" stroke="#666" stroke-width="1.1"/></svg>
<div class="r" style="left:250px;top:171px;width:1212px;height:66px;background:#FFFFFF;box-sizing:border-box;border:1px solid #C6C6C6;"></div>
<div class="t" style="left:262.8px;top:179px;font-size:12.5px;color:#333333;transform:scaleX(1.0795);">Process Management Demo</div>
<div class="r" style="left:0px;top:247px;width:1457px;height:25px;background:#E6E6E6;"></div>
<div class="r" style="left:596px;top:247px;width:300px;height:23px;background:#D2D2D2;"></div>
<div class="r" style="left:36px;top:247px;width:1px;height:24px;background:linear-gradient(#D2D2D2,#B8B8B8 50%,#9C9C9C);"></div>
<div class="r" style="left:316px;top:247px;width:1px;height:24px;background:linear-gradient(#D2D2D2,#B8B8B8 50%,#9C9C9C);"></div>
<div class="r" style="left:596px;top:247px;width:1px;height:24px;background:linear-gradient(#D2D2D2,#B8B8B8 50%,#9C9C9C);"></div>
<div class="r" style="left:896px;top:247px;width:1px;height:24px;background:linear-gradient(#D2D2D2,#B8B8B8 50%,#9C9C9C);"></div>
<div class="r" style="left:1176px;top:247px;width:1px;height:24px;background:linear-gradient(#D2D2D2,#B8B8B8 50%,#9C9C9C);"></div>
<div class="r" style="left:1456px;top:247px;width:1px;height:24px;background:linear-gradient(#D2D2D2,#B8B8B8 50%,#9C9C9C);"></div>
<div class="r" style="left:0px;top:271px;width:1457px;height:1px;background:#ABABAB;"></div>
<div class="r" style="left:596px;top:270px;width:301px;height:2px;background:#217346;"></div>
<div class="t" style="left:171.664px;top:253px;font-size:16px;color:#262626;">A</div>
<div class="t" style="left:451.664px;top:253px;font-size:16px;color:#262626;">B</div>
<div class="t" style="left:741.222625px;top:253px;font-size:16px;color:#1D5E38;">C</div>
<div class="t" style="left:1031.222625px;top:253px;font-size:16px;color:#262626;">D</div>
<div class="t" style="left:1311.664px;top:253px;font-size:16px;color:#262626;">E</div>
<div class="r" style="left:0px;top:272px;width:36px;height:1457px;background:#E6E6E6;"></div>
<div class="r" style="left:36px;top:272px;width:1421px;height:24px;background:#4472C4;"></div>
<div class="r" style="left:36px;top:296px;width:1421px;height:1px;background:#8EA9DB;"></div>
<div class="t" style="left:320.5px;top:276.5px;font-size:17px;color:#FFFFFF;font-weight:700;">file_name</div>
<div class="t" style="left:600.5px;top:276.5px;font-size:17px;color:#FFFFFF;font-weight:700;transform:scaleX(1.0162);">Title</div>
<div class="t" style="left:900.5px;top:276.5px;font-size:17px;color:#FFFFFF;font-weight:700;transform:scaleX(0.9478);">Replica ID</div>
<div class="t" style="left:1180.5px;top:276.5px;font-size:17px;color:#FFFFFF;font-weight:700;transform:scaleX(0.9838);">database_type</div>
<svg class="s" style="left:299px;top:278px;" width="17" height="17" viewBox="0 0 17 17"><rect x=".5" y=".5" width="16" height="16" fill="#F2F2F2" stroke="#A6A6A6" stroke-width="1"/><path d="M5 7 H12 L8.5 10.5Z" fill="#555"/></svg>
<svg class="s" style="left:579px;top:278px;" width="17" height="17" viewBox="0 0 17 17"><rect x=".5" y=".5" width="16" height="16" fill="#F2F2F2" stroke="#A6A6A6" stroke-width="1"/><path d="M5 7 H12 L8.5 10.5Z" fill="#555"/></svg>
<svg class="s" style="left:879px;top:278px;" width="17" height="17" viewBox="0 0 17 17"><rect x=".5" y=".5" width="16" height="16" fill="#F2F2F2" stroke="#A6A6A6" stroke-width="1"/><path d="M5 7 H12 L8.5 10.5Z" fill="#555"/></svg>
<svg class="s" style="left:1159px;top:278px;" width="17" height="17" viewBox="0 0 17 17"><rect x=".5" y=".5" width="16" height="16" fill="#F2F2F2" stroke="#A6A6A6" stroke-width="1"/><path d="M5 7 H12 L8.5 10.5Z" fill="#555"/></svg>
<svg class="s" style="left:1439px;top:278px;" width="17" height="17" viewBox="0 0 17 17"><rect x=".5" y=".5" width="16" height="16" fill="#F2F2F2" stroke="#A6A6A6" stroke-width="1"/><path d="M5 7 H12 L8.5 10.5Z" fill="#555"/></svg>
<div class="r" style="left:36px;top:272px;width:1px;height:1457px;background:#ABABAB;"></div>
<div class="r" style="left:37px;top:297px;width:1420px;height:24px;background:#D9E1F2;"></div>
<div class="r" style="left:37px;top:321px;width:1420px;height:1px;background:#8EA9DB;"></div>
<div class="r" style="left:0px;top:321px;width:36px;height:1px;background:#ABABAB;"></div>
<div class="t" style="left:13.41449171875px;top:302px;font-size:17px;color:#222222;transform:scaleX(0.9700);">2</div>
<div class="t" style="left:320px;top:302px;font-size:17px;color:#000000;transform:scaleX(1.0445);">f6e261f69695bccb1a.nsf</div>
<div class="t" style="left:600px;top:302px;font-size:17px;color:#000000;">Process Management Demo</div>
<div class="t" style="left:900px;top:302px;font-size:17px;color:#000000;transform:scaleX(1.0052);">C12581DF0075AF71</div>
<div class="t" style="left:1180px;top:302px;font-size:17px;color:#000000;transform:scaleX(1.0401);">Application</div>
<div class="r" style="left:37px;top:322px;width:1420px;height:24px;background:#FFFFFF;"></div>
<div class="r" style="left:37px;top:346px;width:1420px;height:1px;background:#8EA9DB;"></div>
<div class="r" style="left:0px;top:346px;width:36px;height:1px;background:#ABABAB;"></div>
<div class="r" style="left:316px;top:322px;width:1px;height:24px;background:#D4D4D4;"></div>
<div class="r" style="left:596px;top:322px;width:1px;height:24px;background:#D4D4D4;"></div>
<div class="r" style="left:896px;top:322px;width:1px;height:24px;background:#D4D4D4;"></div>
<div class="r" style="left:1176px;top:322px;width:1px;height:24px;background:#D4D4D4;"></div>
<div class="r" style="left:1456px;top:322px;width:1px;height:24px;background:#D4D4D4;"></div>
<div class="t" style="left:13.41449171875px;top:327px;font-size:17px;color:#222222;transform:scaleX(0.9700);">3</div>
<div class="t" style="left:40px;top:327px;font-size:17px;color:#000000;transform:scaleX(1.0420);">dev01/acme</div>
<div class="t" style="left:320px;top:327px;font-size:17px;color:#000000;transform:scaleX(1.0392);">abc2f463aefb8912e5.nsf</div>
<div class="t" style="left:600px;top:327px;font-size:17px;color:#000000;">Engineering</div>
<div class="t" style="left:900px;top:327px;font-size:17px;color:#000000;">C1257AB7004AA24F</div>
<div class="t" style="left:1180px;top:327px;font-size:17px;color:#000000;transform:scaleX(1.0401);">Application</div>
<div class="r" style="left:37px;top:347px;width:1420px;height:24px;background:#D9E1F2;"></div>
<div class="r" style="left:37px;top:371px;width:1420px;height:1px;background:#8EA9DB;"></div>
<div class="r" style="left:0px;top:371px;width:36px;height:1px;background:#ABABAB;"></div>
<div class="t" style="left:13.41449171875px;top:352px;font-size:17px;color:#222222;transform:scaleX(0.9700);">4</div>
<div class="t" style="left:40px;top:352px;font-size:17px;color:#000000;transform:scaleX(1.0382);">appmail01/acme</div>
<div class="t" style="left:320px;top:352px;font-size:17px;color:#000000;transform:scaleX(1.0500);">bf678a3079e3273360.nsf</div>
<div class="t" style="left:600px;top:352px;font-size:17px;color:#000000;transform:scaleX(1.0162);">Short Runway</div>
<div class="t" style="left:900px;top:352px;font-size:17px;color:#000000;transform:scaleX(0.9935);">C1257C0B003F068D</div>
<div class="t" style="left:1180px;top:352px;font-size:17px;color:#000000;transform:scaleX(1.0401);">Application</div>
<div class="r" style="left:37px;top:372px;width:1420px;height:24px;background:#FFFFFF;"></div>
<div class="r" style="left:37px;top:396px;width:1420px;height:1px;background:#8EA9DB;"></div>
<div class="r" style="left:0px;top:396px;width:36px;height:1px;background:#ABABAB;"></div>
<div class="r" style="left:316px;top:372px;width:1px;height:24px;background:#D4D4D4;"></div>
<div class="r" style="left:596px;top:372px;width:1px;height:24px;background:#D4D4D4;"></div>
<div class="r" style="left:896px;top:372px;width:1px;height:24px;background:#D4D4D4;"></div>
<div class="r" style="left:1176px;top:372px;width:1px;height:24px;background:#D4D4D4;"></div>
<div class="r" style="left:1456px;top:372px;width:1px;height:24px;background:#D4D4D4;"></div>
<div class="t" style="left:13.41449171875px;top:377px;font-size:17px;color:#222222;transform:scaleX(0.9700);">5</div>
<div class="t" style="left:40px;top:377px;font-size:17px;color:#000000;transform:scaleX(1.0420);">dev01/acme</div>
<div class="t" style="left:320px;top:377px;font-size:17px;color:#000000;transform:scaleX(1.0400);">dae44c275848b59d08.nsf</div>
<div class="t" style="left:600px;top:377px;font-size:17px;color:#000000;transform:scaleX(1.0197);">International Relations</div>
<div class="t" style="left:900px;top:377px;font-size:17px;color:#000000;transform:scaleX(1.0228);">C12582C900798414</div>
<div class="t" style="left:1180px;top:377px;font-size:17px;color:#000000;transform:scaleX(1.0401);">Application</div>
<div class="r" style="left:37px;top:397px;width:1420px;height:24px;background:#D9E1F2;"></div>
<div class="r" style="left:37px;top:421px;width:1420px;height:1px;background:#8EA9DB;"></div>
<div class="r" style="left:0px;top:421px;width:36px;height:1px;background:#ABABAB;"></div>
<div class="t" style="left:13.41449171875px;top:402px;font-size:17px;color:#222222;transform:scaleX(0.9700);">6</div>
<div class="t" style="left:40px;top:402px;font-size:17px;color:#000000;transform:scaleX(1.0382);">appmail01/acme</div>
<div class="t" style="left:320px;top:402px;font-size:17px;color:#000000;transform:scaleX(1.0500);">5904b188f60e8b4d8c.nsf</div>
<div class="t" style="left:600px;top:402px;font-size:17px;color:#000000;transform:scaleX(1.0098);">New Icon Test</div>
<div class="t" style="left:900px;top:402px;font-size:17px;color:#000000;transform:scaleX(1.0052);">C1258266003DCF96</div>
<div class="t" style="left:1180px;top:402px;font-size:17px;color:#000000;transform:scaleX(1.0401);">Application</div>
<div class="r" style="left:37px;top:422px;width:1420px;height:24px;background:#FFFFFF;"></div>
<div class="r" style="left:37px;top:446px;width:1420px;height:1px;background:#8EA9DB;"></div>
<div class="r" style="left:0px;top:446px;width:36px;height:1px;background:#ABABAB;"></div>
<div class="r" style="left:316px;top:422px;width:1px;height:24px;background:#D4D4D4;"></div>
<div class="r" style="left:596px;top:422px;width:1px;height:24px;background:#D4D4D4;"></div>
<div class="r" style="left:896px;top:422px;width:1px;height:24px;background:#D4D4D4;"></div>
<div class="r" style="left:1176px;top:422px;width:1px;height:24px;background:#D4D4D4;"></div>
<div class="r" style="left:1456px;top:422px;width:1px;height:24px;background:#D4D4D4;"></div>
<div class="t" style="left:13.41449171875px;top:427px;font-size:17px;color:#222222;transform:scaleX(0.9700);">7</div>
<div class="t" style="left:40px;top:427px;font-size:17px;color:#000000;transform:scaleX(1.0382);">appmail01/acme</div>
<div class="t" style="left:320px;top:427px;font-size:17px;color:#000000;transform:scaleX(1.0552);">c8f617e52c575da0d7.ntf</div>
<div class="t" style="left:600px;top:427px;font-size:17px;color:#000000;transform:scaleX(1.0284);">Pseudonymized (27f43550e687145be</div>
<div class="t" style="left:900px;top:427px;font-size:17px;color:#000000;transform:scaleX(1.0289);">C125818100691F44</div>
<div class="t" style="left:1180px;top:427px;font-size:17px;color:#000000;transform:scaleX(0.9726);">System Database</div>
<div class="r" style="left:37px;top:447px;width:1420px;height:24px;background:#D9E1F2;"></div>
<div class="r" style="left:37px;top:471px;width:1420px;height:1px;background:#8EA9DB;"></div>
<div class="r" style="left:0px;top:471px;width:36px;height:1px;background:#ABABAB;"></div>
<div class="t" style="left:13.41449171875px;top:452px;font-size:17px;color:#222222;transform:scaleX(0.9700);">8</div>
<div class="t" style="left:40px;top:452px;font-size:17px;color:#000000;transform:scaleX(1.0626);">admin01/demo</div>
<div class="t" style="left:320px;top:452px;font-size:17px;color:#000000;transform:scaleX(1.0448);">44524bd5ea19f1e723.nsf</div>
<div class="t" style="left:600px;top:452px;font-size:17px;color:#000000;transform:scaleX(1.0276);">Testmail02</div>
<div class="t" style="left:900px;top:452px;font-size:17px;color:#000000;transform:scaleX(0.9922);">85257EEC0046812B</div>
<div class="t" style="left:1180px;top:452px;font-size:17px;color:#000000;transform:scaleX(1.0401);">Application</div>
<div class="r" style="left:37px;top:472px;width:1420px;height:24px;background:#FFFFFF;"></div>
<div class="r" style="left:37px;top:496px;width:1420px;height:1px;background:#8EA9DB;"></div>
<div class="r" style="left:0px;top:496px;width:36px;height:1px;background:#ABABAB;"></div>
<div class="r" style="left:316px;top:472px;width:1px;height:24px;background:#D4D4D4;"></div>
<div class="r" style="left:596px;top:472px;width:1px;height:24px;background:#D4D4D4;"></div>
<div class="r" style="left:896px;top:472px;width:1px;height:24px;background:#D4D4D4;"></div>
<div class="r" style="left:1176px;top:472px;width:1px;height:24px;background:#D4D4D4;"></div>
<div class="r" style="left:1456px;top:472px;width:1px;height:24px;background:#D4D4D4;"></div>
<div class="t" style="left:13.41449171875px;top:477px;font-size:17px;color:#222222;transform:scaleX(0.9700);">9</div>
<div class="t" style="left:40px;top:477px;font-size:17px;color:#000000;transform:scaleX(1.0420);">dev01/acme</div>
<div class="t" style="left:320px;top:477px;font-size:17px;color:#000000;transform:scaleX(1.0396);">d881f44ceb906d13ee.nsf</div>
<div class="t" style="left:600px;top:477px;font-size:17px;color:#000000;transform:scaleX(1.0318);">Doclib5</div>
<div class="t" style="left:900px;top:477px;font-size:17px;color:#000000;transform:scaleX(0.9946);">C12582CD003CD938</div>
<div class="t" style="left:1180px;top:477px;font-size:17px;color:#000000;transform:scaleX(1.0401);">Application</div>
<div class="r" style="left:37px;top:497px;width:1420px;height:24px;background:#D9E1F2;"></div>
<div class="r" style="left:37px;top:521px;width:1420px;height:1px;background:#8EA9DB;"></div>
<div class="r" style="left:0px;top:521px;width:36px;height:1px;background:#ABABAB;"></div>
<div class="t" style="left:8.828983437500002px;top:502px;font-size:17px;color:#222222;transform:scaleX(0.9700);">10</div>
<div class="t" style="left:40px;top:502px;font-size:17px;color:#000000;transform:scaleX(1.0626);">admin01/demo</div>
<div class="t" style="left:320px;top:502px;font-size:17px;color:#000000;transform:scaleX(1.0245);">a7de3108a2cc2157c6.nsf</div>
<div class="t" style="left:600px;top:502px;font-size:17px;color:#000000;transform:scaleX(0.9939);">Convergence</div>
<div class="t" style="left:900px;top:502px;font-size:17px;color:#000000;transform:scaleX(0.9627);">85257E4B003E8ECF</div>
<div class="t" style="left:1180px;top:502px;font-size:17px;color:#000000;transform:scaleX(1.0401);">Application</div>
<div class="r" style="left:37px;top:522px;width:1420px;height:24px;background:#FFFFFF;"></div>
<div class="r" style="left:37px;top:546px;width:1420px;height:1px;background:#8EA9DB;"></div>
<div class="r" style="left:0px;top:546px;width:36px;height:1px;background:#ABABAB;"></div>
<div class="r" style="left:316px;top:522px;width:1px;height:24px;background:#D4D4D4;"></div>
<div class="r" style="left:596px;top:522px;width:1px;height:24px;background:#D4D4D4;"></div>
<div class="r" style="left:896px;top:522px;width:1px;height:24px;background:#D4D4D4;"></div>
<div class="r" style="left:1176px;top:522px;width:1px;height:24px;background:#D4D4D4;"></div>
<div class="r" style="left:1456px;top:522px;width:1px;height:24px;background:#D4D4D4;"></div>
<div class="t" style="left:9.44091703125px;top:527px;font-size:17px;color:#222222;transform:scaleX(0.9700);">11</div>
<div class="t" style="left:40px;top:527px;font-size:17px;color:#000000;transform:scaleX(1.0420);">dev01/acme</div>
<div class="t" style="left:320px;top:527px;font-size:17px;color:#000000;transform:scaleX(1.0499);">d50d8f8bf26c277a1c.nsf</div>
<div class="t" style="left:600px;top:527px;font-size:17px;color:#000000;transform:scaleX(1.0115);">Cloud (Archive)</div>
<div class="t" style="left:900px;top:527px;font-size:17px;color:#000000;">C1257FF1003893F7</div>
<div class="t" style="left:1180px;top:527px;font-size:17px;color:#000000;transform:scaleX(1.0401);">Application</div>
<div class="r" style="left:37px;top:547px;width:1420px;height:24px;background:#D9E1F2;"></div>
<div class="r" style="left:37px;top:571px;width:1420px;height:1px;background:#8EA9DB;"></div>
<div class="r" style="left:0px;top:571px;width:36px;height:1px;background:#ABABAB;"></div>
<div class="t" style="left:8.828983437500002px;top:552px;font-size:17px;color:#222222;transform:scaleX(0.9700);">12</div>
<div class="t" style="left:40px;top:552px;font-size:17px;color:#000000;transform:scaleX(1.0238);">apps01/acme</div>
<div class="t" style="left:320px;top:552px;font-size:17px;color:#000000;transform:scaleX(1.0400);">8e73b8ab5449202c91.nsf</div>
<div class="r" style="left:600px;top:547px;width:296px;height:24px;overflow:hidden">
<div class="t" style="left:0;top:5px;font-size:17px;color:#000;transform:scaleX(0.9845559054924622)">English Language Programmes (Archive</div></div>
<div class="t" style="left:900px;top:552px;font-size:17px;color:#000000;">C12576C8003181DE</div>
<div class="t" style="left:1180px;top:552px;font-size:17px;color:#000000;transform:scaleX(1.0401);">Application</div>
<div class="r" style="left:37px;top:572px;width:1420px;height:24px;background:#FFFFFF;"></div>
<div class="r" style="left:37px;top:596px;width:1420px;height:1px;background:#8EA9DB;"></div>
<div class="r" style="left:0px;top:596px;width:36px;height:1px;background:#ABABAB;"></div>
<div class="r" style="left:316px;top:572px;width:1px;height:24px;background:#D4D4D4;"></div>
<div class="r" style="left:596px;top:572px;width:1px;height:24px;background:#D4D4D4;"></div>
<div class="r" style="left:896px;top:572px;width:1px;height:24px;background:#D4D4D4;"></div>
<div class="r" style="left:1176px;top:572px;width:1px;height:24px;background:#D4D4D4;"></div>
<div class="r" style="left:1456px;top:572px;width:1px;height:24px;background:#D4D4D4;"></div>
<div class="t" style="left:8.828983437500002px;top:577px;font-size:17px;color:#222222;transform:scaleX(0.9700);">13</div>
<div class="t" style="left:40px;top:577px;font-size:17px;color:#000000;transform:scaleX(1.0626);">admin01/demo</div>
<div class="t" style="left:320px;top:577px;font-size:17px;color:#000000;transform:scaleX(1.0552);">e196cdf4dbc1c26b17.ntf</div>
<div class="t" style="left:600px;top:577px;font-size:17px;color:#000000;transform:scaleX(1.0092);">Tagging (Archive)</div>
<div class="t" style="left:900px;top:577px;font-size:17px;color:#000000;transform:scaleX(1.0172);">852580A30048D1EB</div>
<div class="t" style="left:1180px;top:577px;font-size:17px;color:#000000;transform:scaleX(1.0401);">Application</div>
<div class="r" style="left:37px;top:597px;width:1420px;height:24px;background:#D9E1F2;"></div>
<div class="r" style="left:37px;top:621px;width:1420px;height:1px;background:#8EA9DB;"></div>
<div class="r" style="left:0px;top:621px;width:36px;height:1px;background:#ABABAB;"></div>
<div class="t" style="left:8.828983437500002px;top:602px;font-size:17px;color:#222222;transform:scaleX(0.9700);">14</div>
<div class="t" style="left:40px;top:602px;font-size:17px;color:#000000;transform:scaleX(1.0382);">appmail01/acme</div>
<div class="t" style="left:320px;top:602px;font-size:17px;color:#000000;transform:scaleX(1.0448);">d96a43edb7485fb2a7.nsf</div>
<div class="t" style="left:600px;top:602px;font-size:17px;color:#000000;transform:scaleX(0.9916);">Management Research Centre</div>
<div class="t" style="left:900px;top:602px;font-size:17px;color:#000000;">C12582EC0029183A</div>
<div class="t" style="left:1180px;top:602px;font-size:17px;color:#000000;transform:scaleX(1.0401);">Application</div>
<div class="r" style="left:37px;top:622px;width:1420px;height:24px;background:#FFFFFF;"></div>
<div class="r" style="left:37px;top:646px;width:1420px;height:1px;background:#8EA9DB;"></div>
<div class="r" style="left:0px;top:646px;width:36px;height:1px;background:#ABABAB;"></div>
<div class="r" style="left:316px;top:622px;width:1px;height:24px;background:#D4D4D4;"></div>
<div class="r" style="left:596px;top:622px;width:1px;height:24px;background:#D4D4D4;"></div>
<div class="r" style="left:896px;top:622px;width:1px;height:24px;background:#D4D4D4;"></div>
<div class="r" style="left:1176px;top:622px;width:1px;height:24px;background:#D4D4D4;"></div>
<div class="r" style="left:1456px;top:622px;width:1px;height:24px;background:#D4D4D4;"></div>
<div class="t" style="left:8.828983437500002px;top:627px;font-size:17px;color:#222222;transform:scaleX(0.9700);">15</div>
<div class="t" style="left:40px;top:627px;font-size:17px;color:#000000;transform:scaleX(1.0382);">appmail01/acme</div>
<div class="t" style="left:320px;top:627px;font-size:17px;color:#000000;transform:scaleX(1.0499);">dfa83aefd7bdd909b8.nsf</div>
<div class="r" style="left:600px;top:622px;width:296px;height:24px;overflow:hidden">
<div class="t" style="left:0;top:5px;font-size:17px;color:#000;transform:scaleX(0.990031081946515)">Systems Development Life-Cycle (Archi</div></div>
<div class="t" style="left:900px;top:627px;font-size:17px;color:#000000;transform:scaleX(0.9873);">C1257C31004AEB79</div>
<div class="t" style="left:1180px;top:627px;font-size:17px;color:#000000;transform:scaleX(1.0401);">Application</div>
<div class="r" style="left:37px;top:647px;width:1420px;height:24px;background:#D9E1F2;"></div>
<div class="r" style="left:37px;top:671px;width:1420px;height:1px;background:#8EA9DB;"></div>
<div class="r" style="left:0px;top:671px;width:36px;height:1px;background:#ABABAB;"></div>
<div class="t" style="left:8.828983437500002px;top:652px;font-size:17px;color:#222222;transform:scaleX(0.9700);">16</div>
<div class="t" style="left:40px;top:652px;font-size:17px;color:#000000;transform:scaleX(1.0238);">apps01/acme</div>
<div class="t" style="left:320px;top:652px;font-size:17px;color:#000000;transform:scaleX(1.0297);">c3cba9d30dcd82de95.nsf</div>
<div class="t" style="left:600px;top:652px;font-size:17px;color:#000000;transform:scaleX(1.0289);">Mindshare (Archive)</div>
<div class="t" style="left:900px;top:652px;font-size:17px;color:#000000;">C12576C80030865E</div>
<div class="t" style="left:1180px;top:652px;font-size:17px;color:#000000;transform:scaleX(1.0401);">Application</div>
<div class="r" style="left:37px;top:672px;width:1420px;height:24px;background:#FFFFFF;"></div>
<div class="r" style="left:37px;top:696px;width:1420px;height:1px;background:#8EA9DB;"></div>
<div class="r" style="left:0px;top:696px;width:36px;height:1px;background:#ABABAB;"></div>
<div class="r" style="left:316px;top:672px;width:1px;height:24px;background:#D4D4D4;"></div>
<div class="r" style="left:596px;top:672px;width:1px;height:24px;background:#D4D4D4;"></div>
<div class="r" style="left:896px;top:672px;width:1px;height:24px;background:#D4D4D4;"></div>
<div class="r" style="left:1176px;top:672px;width:1px;height:24px;background:#D4D4D4;"></div>
<div class="r" style="left:1456px;top:672px;width:1px;height:24px;background:#D4D4D4;"></div>
<div class="t" style="left:8.828983437500002px;top:677px;font-size:17px;color:#222222;transform:scaleX(0.9700);">17</div>
<div class="t" style="left:40px;top:677px;font-size:17px;color:#000000;transform:scaleX(1.0382);">appmail01/acme</div>
<div class="t" style="left:320px;top:677px;font-size:17px;color:#000000;transform:scaleX(1.0445);">7afaa2f243985bc247.nsf</div>
<div class="t" style="left:600px;top:677px;font-size:17px;color:#000000;transform:scaleX(1.0265);">Recruitment Portal</div>
<div class="t" style="left:900px;top:677px;font-size:17px;color:#000000;transform:scaleX(1.0119);">C1257CD1003872D1</div>
<div class="t" style="left:1180px;top:677px;font-size:17px;color:#000000;">Mailin Database</div>
<div class="r" style="left:37px;top:697px;width:1420px;height:24px;background:#D9E1F2;"></div>
<div class="r" style="left:37px;top:721px;width:1420px;height:1px;background:#8EA9DB;"></div>
<div class="r" style="left:0px;top:721px;width:36px;height:1px;background:#ABABAB;"></div>
<div class="t" style="left:8.828983437500002px;top:702px;font-size:17px;color:#222222;transform:scaleX(0.9700);">18</div>
<div class="t" style="left:40px;top:702px;font-size:17px;color:#000000;transform:scaleX(1.0382);">appmail01/acme</div>
<div class="t" style="left:320px;top:702px;font-size:17px;color:#000000;transform:scaleX(1.0448);">0f87d4756ec66553c9.nsf</div>
<div class="t" style="left:600px;top:702px;font-size:17px;color:#000000;transform:scaleX(1.0071);">Content Management System</div>
<div class="t" style="left:900px;top:702px;font-size:17px;color:#000000;">C1257C31004B49AD</div>
<div class="t" style="left:1180px;top:702px;font-size:17px;color:#000000;transform:scaleX(1.0401);">Application</div>
<div class="r" style="left:37px;top:722px;width:1420px;height:24px;background:#FFFFFF;"></div>
<div class="r" style="left:37px;top:746px;width:1420px;height:1px;background:#8EA9DB;"></div>
<div class="r" style="left:0px;top:746px;width:36px;height:1px;background:#ABABAB;"></div>
<div class="r" style="left:316px;top:722px;width:1px;height:24px;background:#D4D4D4;"></div>
<div class="r" style="left:596px;top:722px;width:1px;height:24px;background:#D4D4D4;"></div>
<div class="r" style="left:896px;top:722px;width:1px;height:24px;background:#D4D4D4;"></div>
<div class="r" style="left:1176px;top:722px;width:1px;height:24px;background:#D4D4D4;"></div>
<div class="r" style="left:1456px;top:722px;width:1px;height:24px;background:#D4D4D4;"></div>
<div class="t" style="left:8.828983437500002px;top:727px;font-size:17px;color:#222222;transform:scaleX(0.9700);">19</div>
<div class="t" style="left:40px;top:727px;font-size:17px;color:#000000;transform:scaleX(1.0382);">appmail02/acme</div>
<div class="t" style="left:320px;top:727px;font-size:17px;color:#000000;transform:scaleX(1.0343);">e62123c7eb9ecec7b1.ntf</div>
<div class="t" style="left:600px;top:727px;font-size:17px;color:#000000;transform:scaleX(1.0209);">Part of our DNA</div>
<div class="t" style="left:900px;top:727px;font-size:17px;color:#000000;transform:scaleX(1.0228);">C12580420069986C</div>
<div class="t" style="left:1180px;top:727px;font-size:17px;color:#000000;transform:scaleX(1.0401);">Application</div>
<div class="r" style="left:37px;top:747px;width:1420px;height:24px;background:#D9E1F2;"></div>
<div class="r" style="left:37px;top:771px;width:1420px;height:1px;background:#8EA9DB;"></div>
<div class="r" style="left:0px;top:771px;width:36px;height:1px;background:#ABABAB;"></div>
<div class="t" style="left:8.828983437500002px;top:752px;font-size:17px;color:#222222;transform:scaleX(0.9700);">20</div>
<div class="t" style="left:40px;top:752px;font-size:17px;color:#000000;transform:scaleX(1.0238);">apps01/acme</div>
<div class="t" style="left:320px;top:752px;font-size:17px;color:#000000;transform:scaleX(1.0497);">c48fa477bbc3fcbf46.nsf</div>
<div class="t" style="left:600px;top:752px;font-size:17px;color:#000000;transform:scaleX(1.0178);">Bizmeth</div>
<div class="t" style="left:900px;top:752px;font-size:17px;color:#000000;transform:scaleX(1.0231);">C125790300529D6F</div>
<div class="t" style="left:1180px;top:752px;font-size:17px;color:#000000;transform:scaleX(1.0401);">Application</div>
<div class="r" style="left:37px;top:772px;width:1420px;height:24px;background:#FFFFFF;"></div>
<div class="r" style="left:37px;top:796px;width:1420px;height:1px;background:#8EA9DB;"></div>
<div class="r" style="left:0px;top:796px;width:36px;height:1px;background:#ABABAB;"></div>
<div class="r" style="left:316px;top:772px;width:1px;height:24px;background:#D4D4D4;"></div>
<div class="r" style="left:596px;top:772px;width:1px;height:24px;background:#D4D4D4;"></div>
<div class="r" style="left:896px;top:772px;width:1px;height:24px;background:#D4D4D4;"></div>
<div class="r" style="left:1176px;top:772px;width:1px;height:24px;background:#D4D4D4;"></div>
<div class="r" style="left:1456px;top:772px;width:1px;height:24px;background:#D4D4D4;"></div>
<div class="t" style="left:8.828983437500002px;top:777px;font-size:17px;color:#222222;transform:scaleX(0.9700);">21</div>
<div class="t" style="left:40px;top:777px;font-size:17px;color:#000000;transform:scaleX(1.0542);">appmail01/demo</div>
<div class="t" style="left:320px;top:777px;font-size:17px;color:#000000;transform:scaleX(1.0391);">cd1e5ea1fcf19207d7.nsf</div>
<div class="t" style="left:600px;top:777px;font-size:17px;color:#000000;transform:scaleX(1.0279);">Customer Directory</div>
<div class="t" style="left:900px;top:777px;font-size:17px;color:#000000;transform:scaleX(1.0357);">85257A5B004D5453</div>
<div class="t" style="left:1180px;top:777px;font-size:17px;color:#000000;transform:scaleX(1.0401);">Application</div>
<div class="r" style="left:37px;top:797px;width:1420px;height:24px;background:#D9E1F2;"></div>
<div class="r" style="left:37px;top:821px;width:1420px;height:1px;background:#8EA9DB;"></div>
<div class="r" style="left:0px;top:821px;width:36px;height:1px;background:#ABABAB;"></div>
<div class="t" style="left:8.828983437500002px;top:802px;font-size:17px;color:#222222;transform:scaleX(0.9700);">22</div>
<div class="t" style="left:40px;top:802px;font-size:17px;color:#000000;transform:scaleX(1.0382);">appmail01/acme</div>
<div class="t" style="left:320px;top:802px;font-size:17px;color:#000000;transform:scaleX(1.0343);">e62123c7eb9ecec7b1.ntf</div>
<div class="t" style="left:600px;top:802px;font-size:17px;color:#000000;transform:scaleX(1.0209);">Part of our DNA</div>
<div class="t" style="left:900px;top:802px;font-size:17px;color:#000000;transform:scaleX(1.0228);">C12580420069986C</div>
<div class="t" style="left:1180px;top:802px;font-size:17px;color:#000000;transform:scaleX(1.0401);">Application</div>
<div class="r" style="left:37px;top:822px;width:1420px;height:24px;background:#FFFFFF;"></div>
<div class="r" style="left:316px;top:822px;width:1px;height:24px;background:#D4D4D4;"></div>
<div class="r" style="left:596px;top:822px;width:1px;height:24px;background:#D4D4D4;"></div>
<div class="r" style="left:896px;top:822px;width:1px;height:24px;background:#D4D4D4;"></div>
<div class="r" style="left:1176px;top:822px;width:1px;height:24px;background:#D4D4D4;"></div>
<div class="r" style="left:1456px;top:822px;width:1px;height:24px;background:#D4D4D4;"></div>
<div class="r" style="left:595px;top:296px;width:302px;height:26px;box-sizing:border-box;border:2px solid #217346"></div>
<div class="r" style="left:894px;top:319px;width:5px;height:5px;background:#217346;box-shadow:0 0 0 1px #fff;"></div>
<div class="r" style="left:3px;top:62px;width:223px;height:264px;box-shadow:inset 3px 3px 4px rgba(0,0,0,.25)"></div>
<div class="r" style="left:8px;top:161px;width:214px;height:160px;background:#fff;box-sizing:border-box;border:1px solid #C6C6C6;box-shadow:0 0 2px rgba(0,0,0,.18)"></div>
<div class="t" style="left:20.2px;top:170px;font-size:12px;color:#444444;font-weight:700;transform:scaleX(0.9835);">PivotTable</div>
<div class="t" style="left:20.2px;top:195.5px;font-size:11.6px;color:#505050;transform:scaleX(0.9945);">Easily arrange and summarize</div>
<div class="t" style="left:20.2px;top:210px;font-size:11.6px;color:#505050;transform:scaleX(1.0259);">complex data in a PivotTable.</div>
<div class="t" style="left:20.2px;top:240px;font-size:11.6px;color:#505050;transform:scaleX(1.0191);">FYI: You can double-click a value to</div>
<div class="t" style="left:20.2px;top:255px;font-size:11.6px;color:#505050;transform:scaleX(1.0083);">see which detailed values make up</div>
<div class="t" style="left:20.2px;top:270px;font-size:11.6px;color:#505050;transform:scaleX(1.0325);">the summarized total.</div>
<div class="r" style="left:13px;top:289px;width:204px;height:1px;background:#DADADA;"></div>
<svg class="s" style="left:18px;top:296px;" width="18" height="18" viewBox="0 0 18 18"><circle cx="9" cy="9" r="7.6" fill="none" stroke="#2D7FC7" stroke-width="1.1"/><path d="M6.5 7 A2.5 2.5 0 1 1 10 9.2 C9 9.8 9 10.5 9 11.5" fill="none" stroke="#2D7FC7" stroke-width="1.1"/><circle cx="9" cy="13.5" r=".8" fill="#2D7FC7"/></svg>
<div class="t" style="left:43.5px;top:300px;font-size:12px;color:#2F5F8E;font-weight:700;">Tell me more</div>
<div class="r" style="left:1px;top:60px;width:227px;height:268px;box-sizing:border-box;border:2px solid #FF0000;box-shadow:2px 3px 5px rgba(0,0,0,.35)"></div>
<svg class="s" style="left:57px;top:129px;" width="16" height="23" viewBox="0 0 16 23"><path d="M2.5 2.2 V18.5 L6.5 15 L9.8 20.3 L12 19.3 L9 13.9 H13.9 Z" fill="#fff" stroke="#000" stroke-width="1" stroke-linejoin="round"/></svg>
</body></html>
